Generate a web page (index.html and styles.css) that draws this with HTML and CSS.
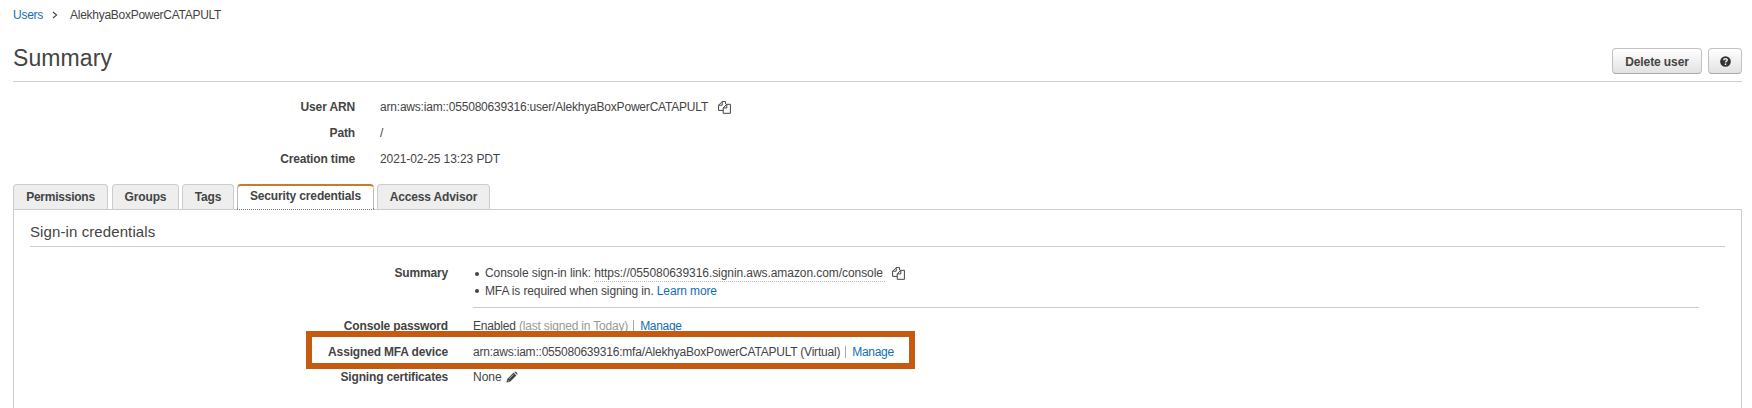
FILE: index.html
```html
<!DOCTYPE html>
<html lang="en">
<head>
<meta charset="utf-8">
<title>Users - Summary</title>
<link rel="stylesheet" href="styles.css">
</head>
<body>
<svg width="0" height="0" class="defs">
  <symbol id="copy" viewBox="0 0 13 13">
    <path d="M4.2 .6H7.6V3.2M4.2 .6L.6 4.2V9.4H5.2M4.2 .6V4.2H.6M8.8 3.3H12.4V12.3H5.2V6.9L8.8 3.3V6.9H5.2" fill="none" stroke="currentColor" stroke-width="1"/>
  </symbol>
</svg>
<nav class="crumbs"><a href="#">Users</a><svg class="chevron" viewBox="0 0 6 8"><path d="M1 1L4.6 4L1 7" fill="none" stroke="#444" stroke-width="1.1"/></svg><span class="crumb-name">AlekhyaBoxPowerCATAPULT</span></nav>
<header class="header">
  <h1>Summary</h1>
  <div class="actions">
    <button class="btn delete">Delete user</button>
    <button class="btn help" aria-label="Help"><svg viewBox="0 0 12 12"><circle cx="6" cy="6" r="5.8" fill="#333"/><path d="M4 4.6C4.1 2.5 8 2.4 7.9 4.5C7.8 5.7 6.1 5.7 6.1 7.2" fill="none" stroke="#eee" stroke-width="1.6"/><rect x="5.2" y="8.1" width="1.7" height="1.7" fill="#eee"/></svg></button>
  </div>
</header>
<dl class="details">
  <dt>User ARN</dt><dd><span class="arn">arn:aws:iam::055080639316:user/AlekhyaBoxPowerCATAPULT</span><svg class="copy"><use href="#copy"/></svg></dd>
  <dt>Path</dt><dd>/</dd>
  <dt>Creation time</dt><dd><span class="date">2021-02-25 13:23 PDT</span></dd>
</dl>
<div class="tabs">
  <div class="tab permissions">Permissions</div>
  <div class="tab groups">Groups</div>
  <div class="tab tags">Tags</div>
  <div class="tab active">Security credentials</div>
  <div class="tab advisor">Access Advisor</div>
</div>
<main class="panel">
  <h2><span>Sign-in credentials</span></h2>
  <div class="row summary">
    <div class="label">Summary</div>
    <ul>
      <li><span class="console">Console sign-in link: <span class="url">https://055080639316.signin.aws.amazon.com/console</span></span><svg class="copy"><use href="#copy"/></svg></li>
      <li><span class="required">MFA is required when signing in. <a href="#">Learn more</a></span></li>
    </ul>
  </div>
  <div class="row password">
    <div class="label">Console password</div>
    <div class="value"><span class="status">Enabled <span class="muted">(last signed in Today)</span></span><i class="bar"></i><a href="#">Manage</a></div>
  </div>
  <div class="row mfa">
    <div class="label">Assigned MFA device</div>
    <div class="value"><span class="mfa-arn">arn:aws:iam::055080639316:mfa/AlekhyaBoxPowerCATAPULT (Virtual)</span><i class="bar"></i><a href="#">Manage</a></div>
    <div class="highlight"></div>
  </div>
  <div class="row certs">
    <div class="label">Signing certificates</div>
    <div class="value">None<svg class="pencil" viewBox="0 0 12 12"><path d="M.4 11.6L1.2 8L7.6 1.6L10.4 4.4L4 10.8Z" fill="#444"/><path d="M8.3 .9Q9.2 0 10.1 .9L11.1 1.9Q12 2.8 11.1 3.7Z" fill="#444"/><path d="M2.8 8L7.4 3.4M1.4 9L3 10.6" stroke="#ddd" stroke-width=".7"/></svg></div>
  </div>
</main>
</body>
</html>
```
FILE: styles.css
```css
* { box-sizing: border-box; }
body {
  margin: 0;
  height: 408px;
  overflow: hidden;
  padding: 0 10px 0 13px;
  background: #fff;
  color: #444;
  font: 12px/16px "Liberation Sans", Arial, sans-serif;
  display: flex;
  flex-direction: column;
}
a { color: #146eb4; text-decoration: none; }
.defs { position: absolute; }
.crumbs { display: flex; align-items: center; height: 30px; flex: none; letter-spacing: -.27px; }
.chevron { width: 6px; height: 8px; margin: 0 12px 0 9px; }
.header {
  flex: none;
  height: 52px;
  display: flex;
  justify-content: space-between;
  border-bottom: 1px solid #ccc;
}
h1 { margin: 15px 0 0; font-size: 23px; line-height: 26px; font-weight: 400; letter-spacing: .1px; }
.actions { display: flex; gap: 6px; padding-top: 18px; }
.btn {
  height: 26px;
  padding: 0;
  border: 1px solid #c2c2c2;
  border-bottom-color: #aaa;
  border-radius: 4px;
  background: linear-gradient(#fff, #e2e2e2);
  color: #444;
  font: bold 12px "Liberation Sans", Arial, sans-serif;
  letter-spacing: -.1px;
}
.delete { width: 90px; padding-top: 1px; }
.help { width: 34px; display: flex; align-items: center; justify-content: center; }
.help svg { width: 11px; height: 11px; }
.details {
  flex: none;
  margin: 12px 0 12px;
  display: grid;
  grid-template-columns: 342px 1fr;
  grid-auto-rows: 26px;
  column-gap: 25px;
  align-items: center;
  height: 78px;
}
dt { text-align: right; font-weight: bold; letter-spacing: -.14px; }
dd { margin: 0; display: flex; align-items: center; }
.arn { letter-spacing: -.2px; }
.date { letter-spacing: -.1px; }
.copy { width: 13px; height: 13px; margin-left: 10px; }
.tabs { flex: none; display: flex; height: 25px; position: relative; z-index: 1; }
.tab {
  height: 25px;
  border: 1px solid #ccc;
  border-bottom: 0;
  border-radius: 4px 4px 0 0;
  background: #eee;
  font-weight: bold;
  text-align: center;
  line-height: 25px;
  white-space: nowrap;
  letter-spacing: -.15px;
}
.permissions { width: 95px; margin-right: 4px; letter-spacing: -.25px; }
.groups { width: 67px; margin-right: 3px; }
.tags { width: 52px; margin-right: 3px; }
.active {
  width: 137px;
  height: 26px;
  margin-right: 3px;
  border: 1px dotted #777;
  border-top: 2px solid #c77c2a;
  background: #fff;
  line-height: 20px;
}
.advisor { width: 113px; }
.panel {
  flex: 1;
  border: 1px solid #ccc;
  border-bottom: 0;
  padding: 0 16px;
}
h2 {
  margin: 0 0 18px;
  height: 37px;
  padding-top: 12px;
  border-bottom: 1px solid #ccc;
  font-size: 15px;
  line-height: 20px;
  font-weight: 400;
  letter-spacing: .1px;
}
.row {
  display: grid;
  grid-template-columns: 418px 1fr;
  column-gap: 25px;
  height: 26px;
  align-items: center;
  position: relative;
}
.label { text-align: right; font-weight: bold; letter-spacing: -.16px; }
.value { display: flex; align-items: center; white-space: nowrap; }
.value a { letter-spacing: -.3px; }
.summary { height: 43px; align-items: start; margin-bottom: 5px; }
ul {
  margin: 0 26px 0 0;
  padding: 0;
  height: 43px;
  list-style: none;
  border-bottom: 1px solid #ccc;
}
li { display: flex; align-items: center; height: 17px; }
li::before {
  content: "";
  width: 4px;
  height: 4px;
  border-radius: 50%;
  background: #444;
  margin: 0 6px 0 2px;
}
.console { letter-spacing: -.07px; }
.required { letter-spacing: -.13px; }
.url { display: inline-block; height: 17px; border-bottom: 1px dotted #bbb; padding-right: 2px; }
li .copy { margin-left: 7px; }
.status { letter-spacing: -.18px; }
.mfa { height: 25px; }
.mfa-arn { letter-spacing: -.21px; }
.muted { color: #999; }
.bar { width: 1px; height: 12px; background: #aaa; margin: 0 6px 0 5px; }
.highlight {
  position: absolute;
  left: 276px;
  top: -8px;
  width: 609px;
  height: 38px;
  border: 6px solid #c55a11;
}
.pencil { width: 12px; height: 12px; margin-left: 4px; }
```
